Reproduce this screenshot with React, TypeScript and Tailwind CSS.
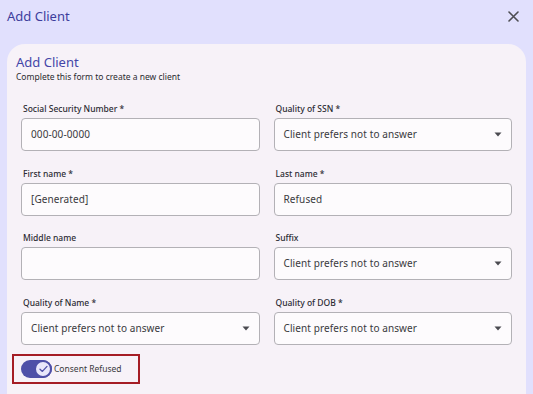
import React from "react";

const font = { fontFamily: '"Noto Sans", "Open Sans", sans-serif' };

function Label({ children }: { children: React.ReactNode }) {
  return (
    <div className="h-[12px] mb-[3px] pl-[2px] text-[8.5px] leading-[12px] font-medium text-[#2b2b33]">
      {children}
    </div>
  );
}

function TextInput({ value }: { value: string }) {
  return (
    <div className="h-[33px] rounded-[4px] border border-[#b3b1b6] bg-[#fdfbfd] flex items-center px-[9px] text-[10px] tracking-[0.1px] text-[#3a3a40]">
      {value}
    </div>
  );
}

function Select({ value }: { value: string }) {
  return (
    <div className="h-[33px] rounded-[4px] border border-[#b3b1b6] bg-[#fdfbfd] flex items-center justify-between pl-[9px] pr-[9px] text-[10px] tracking-[0.1px] text-[#3a3a40]">
      <span>{value}</span>
      <svg width="8" height="5" viewBox="0 0 8 5">
        <path d="M0.5 0.5 L7.5 0.5 L4 4.5 Z" fill="#4a4a50" />
      </svg>
    </div>
  );
}

function Field({ label, children }: { label: string; children: React.ReactNode }) {
  return (
    <div className="flex flex-col">
      <Label>{label}</Label>
      {children}
    </div>
  );
}

export default function App() {
  const sel = "Client prefers not to answer";
  return (
    <div style={font} className="w-[533px] h-[394px] overflow-hidden bg-[#e1e0fd] flex flex-col">
      <div className="h-[32px] flex items-center justify-between pl-[7px] pr-[14px] shrink-0">
        <span className="text-[13px] leading-[16px] text-[#3d3e9c]">Add Client</span>
        <svg width="11" height="11" viewBox="0 0 11 11">
          <path d="M1 1 L10 10 M10 1 L1 10" stroke="#4d4d52" strokeWidth="1.6" strokeLinecap="round" />
        </svg>
      </div>
      <div className="mt-[12px] ml-[7px] w-[519px] grow rounded-t-[18px] bg-[#f7f2f8] pt-[10px] px-[14px]">
        <div className="-ml-[5px]">
          <div className="text-[13px] leading-[16px] text-[#4446a8]">Add Client</div>
          <div className="text-[8.5px] leading-[11px] text-[#2b2b30] mt-[1px]">
            Complete this form to create a new client
          </div>
        </div>
        <div className="mt-[21px] grid grid-cols-2 gap-x-[14px] gap-y-[16.5px]">
          <Field label="Social Security Number *">
            <TextInput value="000-00-0000" />
          </Field>
          <Field label="Quality of SSN *">
            <Select value={sel} />
          </Field>
          <Field label="First name *">
            <TextInput value="[Generated]" />
          </Field>
          <Field label="Last name *">
            <TextInput value="Refused" />
          </Field>
          <Field label="Middle name">
            <TextInput value="" />
          </Field>
          <Field label="Suffix">
            <Select value={sel} />
          </Field>
          <Field label="Quality of Name *">
            <Select value={sel} />
          </Field>
          <Field label="Quality of DOB *">
            <Select value={sel} />
          </Field>
        </div>
        <div className="mt-[9px] -ml-[9px] w-[128px] h-[30px] border-2 border-[#a51d25] flex items-center pl-[7px] gap-[2px]">
          <div className="relative w-[31px] h-[18px] rounded-full bg-[#4f50a8]">
            <div className="absolute right-0 top-0 w-[18px] h-[18px] rounded-full bg-[#e9e7fb] border-2 border-[#4f50a8] flex items-center justify-center">
              <svg width="9" height="8" viewBox="0 0 9 8">
                <path d="M1 4.2 L3.4 6.4 L8 1.4" stroke="#4f50a8" strokeWidth="1.3" fill="none" strokeLinecap="round" strokeLinejoin="round" />
              </svg>
            </div>
          </div>
          <span className="text-[8.5px] leading-[12px] text-[#3a3a40]">Consent Refused</span>
        </div>
      </div>
    </div>
  );
}
